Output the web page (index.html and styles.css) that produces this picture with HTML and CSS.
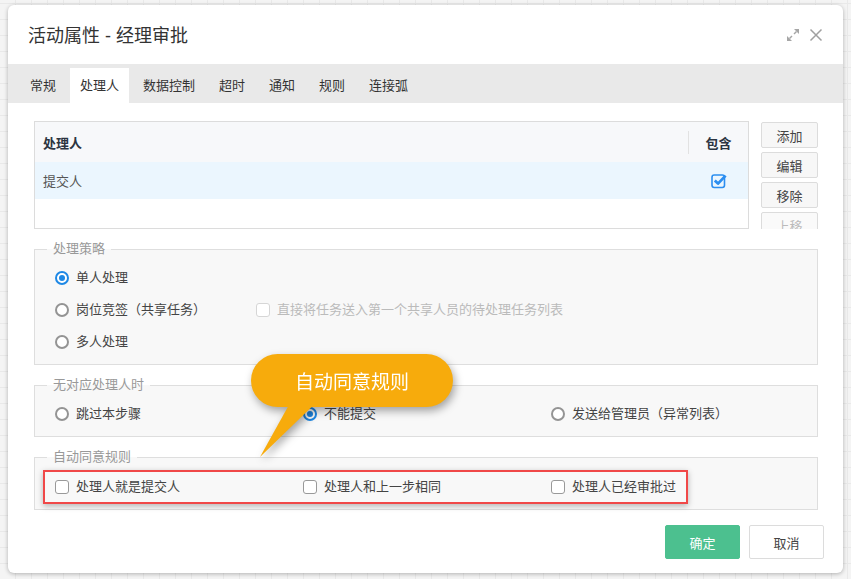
FILE: index.html
```html
<!DOCTYPE html>
<html lang="zh-CN">
<head>
<meta charset="utf-8">
<title>活动属性 - 经理审批</title>
<link rel="stylesheet" href="styles.css">
</head>
<body>
<div class="dialog">
  <div class="titlebar">
    <span class="title">活动属性 - 经理审批</span>
    <div class="tools">
      <svg class="icon-expand" width="14" height="14" viewBox="0 0 14 14">
        <polygon points="13,1 13,6 8,1" fill="#a6a6a6"/>
        <line x1="10.5" y1="3.5" x2="8" y2="6" stroke="#a6a6a6" stroke-width="1.4"/>
        <polygon points="1,13 1,8 6,13" fill="#a6a6a6"/>
        <line x1="3.5" y1="10.5" x2="6" y2="8" stroke="#a6a6a6" stroke-width="1.4"/>
      </svg>
      <svg class="icon-close" width="14" height="14" viewBox="0 0 14 14">
        <path d="M1.5 1.5 L12.5 12.5 M12.5 1.5 L1.5 12.5" stroke="#a0a0a0" stroke-width="1.5" fill="none"/>
      </svg>
    </div>
  </div>
  <div class="tabs">
    <span class="tab">常规</span>
    <span class="tab active">处理人</span>
    <span class="tab">数据控制</span>
    <span class="tab">超时</span>
    <span class="tab">通知</span>
    <span class="tab">规则</span>
    <span class="tab">连接弧</span>
  </div>
  <div class="content">
    <div class="handlers">
      <div class="grid">
        <div class="grid-head">
          <div class="col-name">处理人</div>
          <div class="col-inc head-inc">包含</div>
        </div>
        <div class="grid-row">
          <div class="col-name">提交人</div>
          <div class="col-inc">
            <svg width="16" height="16" viewBox="0 0 16 16">
              <rect x="1" y="2" width="12.5" height="12.5" rx="2.2" fill="none" stroke="#2b8ef0" stroke-width="1.6"/>
              <path d="M3.8 7.6 L7 10.6 L14.6 2.6" fill="none" stroke="#2b8ef0" stroke-width="2.8" stroke-linejoin="round"/>
            </svg>
          </div>
        </div>
      </div>
      <div class="side-btns">
        <button class="side-btn">添加</button>
        <button class="side-btn">编辑</button>
        <button class="side-btn">移除</button>
        <button class="side-btn disabled">上移</button>
      </div>
    </div>

    <fieldset class="group">
      <legend>处理策略</legend>
      <div class="group-body">
        <div class="opt-row">
          <label class="radio checked"><span class="dot"></span>单人处理</label>
        </div>
        <div class="opt-row">
          <label class="radio first-wide"><span class="dot"></span>岗位竞签（共享任务）</label>
          <label class="check disabled"><span class="box"></span>直接将任务送入第一个共享人员的待处理任务列表</label>
        </div>
        <div class="opt-row">
          <label class="radio"><span class="dot"></span>多人处理</label>
        </div>
      </div>
    </fieldset>

    <fieldset class="group">
      <legend>无对应处理人时</legend>
      <div class="group-body">
        <div class="opt-row cols">
          <label class="radio"><span class="dot"></span>跳过本步骤</label>
          <label class="radio checked"><span class="dot"></span>不能提交</label>
          <label class="radio"><span class="dot"></span>发送给管理员（异常列表）</label>
        </div>
      </div>
    </fieldset>

    <fieldset class="group last">
      <legend>自动同意规则</legend>
      <div class="group-body tight">
        <div class="highlight">
          <div class="opt-row cols">
            <label class="check"><span class="box"></span>处理人就是提交人</label>
            <label class="check"><span class="box"></span>处理人和上一步相同</label>
            <label class="check"><span class="box"></span>处理人已经审批过</label>
          </div>
        </div>
      </div>
    </fieldset>
  </div>
  <div class="footer">
    <button class="btn btn-primary">确定</button>
    <button class="btn">取消</button>
  </div>

  <div class="callout">
    <svg class="callout-tail" width="80" height="110" viewBox="0 0 80 110">
      <polygon points="44,40 74,40 9,103" fill="#f7ab0c"/>
    </svg>
    <div class="callout-pill">自动同意规则</div>
  </div>
</div>
</body>
</html>
```
FILE: styles.css
```css
* { box-sizing: border-box; }

html, body {
  margin: 0;
  height: 100%;
}

body {
  padding: 5px 0 0 8px;
  background-color: #f4f4f4;
  background-image:
    repeating-linear-gradient(0deg, transparent 0 15px, #e9e9e9 15px 16px),
    repeating-linear-gradient(90deg, transparent 0 15px, #e9e9e9 15px 16px);
  font-family: "Liberation Sans", "Noto Sans CJK SC", sans-serif;
  font-size: 13px;
  color: #444;
}

.dialog {
  position: relative;
  width: 835px;
  height: 568px;
  background: #fff;
  border-radius: 6px;
  box-shadow: 0 1px 4px rgba(0, 0, 0, 0.28);
  overflow: hidden;
}

.titlebar {
  height: 59px;
  display: flex;
  align-items: center;
  justify-content: space-between;
  padding: 0 20px 0 20px;
}

.title {
  font-size: 18px;
  color: #333;
  line-height: 20px;
  padding-top: 2px;
}

.tools {
  display: flex;
  align-items: center;
  gap: 9px;
  padding-top: 1px;
}

.tools svg { display: block; }

.tabs {
  height: 39px;
  background: #e9e9e9;
  display: flex;
  align-items: flex-end;
  gap: 4px;
  padding: 4px 0 0 12px;
}

.tab {
  height: 35px;
  line-height: 35px;
  padding: 0 10px;
  font-size: 13px;
  color: #333;
}

.tab.active {
  background: #fff;
}

.content {
  padding: 18px 25px 0 26px;
}

.handlers {
  display: flex;
  gap: 12px;
  height: 108px;
}

.grid {
  flex: 1;
  border: 1px solid #dcdcdc;
  background: #fff;
}

.grid-head {
  height: 40px;
  background: #f7f8fa;
  display: flex;
  align-items: center;
  font-weight: bold;
  color: #2b3440;
}

.grid-row {
  height: 37px;
  background: #ebf6fe;
  display: flex;
  align-items: center;
  color: #555;
}

.col-name {
  flex: 1;
  padding-left: 8px;
}

.col-inc {
  width: 60px;
  display: flex;
  align-items: center;
  justify-content: center;
}

.col-inc svg { display: block; margin-left: 1px; }

.head-inc {
  height: 23px;
  border-left: 1px solid #e2e2e2;
}

.side-btns {
  width: 57px;
  height: 108px;
  overflow: hidden;
  display: flex;
  flex-direction: column;
  gap: 4px;
  padding-top: 1px;
}

.side-btn {
  flex: none;
  height: 26px;
  border: 1px solid #dcdcdc;
  border-radius: 2px;
  background: #f7f7f7;
  font-family: inherit;
  font-size: 13px;
  color: #444;
  padding: 0;
}

.side-btn.disabled {
  color: #bbb;
  background: #fafafa;
}

.group {
  margin: 11px 0 0 0;
  padding: 4px 0 6px 12px;
  border: 1px solid #dedede;
  background: #f8f8f8;
  min-width: 0;
}

.group.last { margin-top: 11px; padding-bottom: 5px; }

.group legend {
  padding: 0 6px;
  line-height: 18px;
  font-size: 13px;
  color: #999;
}

.group-body {
  padding-left: 8px;
}

.group-body.tight {
  padding-left: 0;
}

.opt-row {
  height: 32px;
  display: flex;
  align-items: center;
}

.opt-row.cols {
  display: grid;
  grid-template-columns: repeat(3, 248px);
  align-items: center;
}

.radio, .check {
  display: flex;
  align-items: center;
  color: #444;
  line-height: 18px;
  white-space: nowrap;
}

.first-wide { width: 201px; }

.dot {
  width: 14px;
  height: 14px;
  border: 2px solid #949494;
  border-radius: 50%;
  margin-right: 7px;
  background: #fff;
  position: relative;
  flex: none;
}

.radio.checked .dot {
  border-color: #1e88e5;
}

.radio.checked .dot::after {
  content: "";
  position: absolute;
  left: 2px;
  top: 2px;
  width: 6px;
  height: 6px;
  border-radius: 50%;
  background: #1e88e5;
}

.box {
  width: 14px;
  height: 14px;
  border: 1.5px solid #999;
  border-radius: 3px;
  margin-right: 7px;
  background: #fff;
  flex: none;
}

.check.disabled { color: #bbb; }
.check.disabled .box { border-color: #d6d6d6; }

.highlight {
  width: 645px;
  height: 34px;
  margin-left: -4px;
  border: 2px solid #f04848;
  box-shadow: 0 2px 6px rgba(0, 0, 0, 0.28);
  padding-left: 10px;
  display: flex;
  align-items: center;
}

.footer {
  display: flex;
  justify-content: flex-end;
  gap: 9px;
  padding: 15px 19px 0 0;
}

.btn {
  width: 75px;
  height: 34px;
  border: 1px solid #dcdcdc;
  border-radius: 2px;
  background: #fff;
  font-family: inherit;
  font-size: 13px;
  color: #444;
  padding: 0;
}

.btn-primary {
  background: #4cc08f;
  border-color: #4cc08f;
  color: #fff;
}

.callout {
  position: absolute;
  left: 243px;
  top: 349px;
  width: 202px;
  height: 53px;
  filter: drop-shadow(2px 4px 4px rgba(0, 0, 0, 0.35));
}

.callout-tail {
  position: absolute;
  left: 0;
  top: 0;
  overflow: visible;
}

.callout-pill {
  position: relative;
  height: 53px;
  border-radius: 27px;
  background: #f7ab0c;
  color: #fff;
  font-size: 19px;
  display: flex;
  align-items: center;
  justify-content: center;
  padding-bottom: 1px;
}
```
